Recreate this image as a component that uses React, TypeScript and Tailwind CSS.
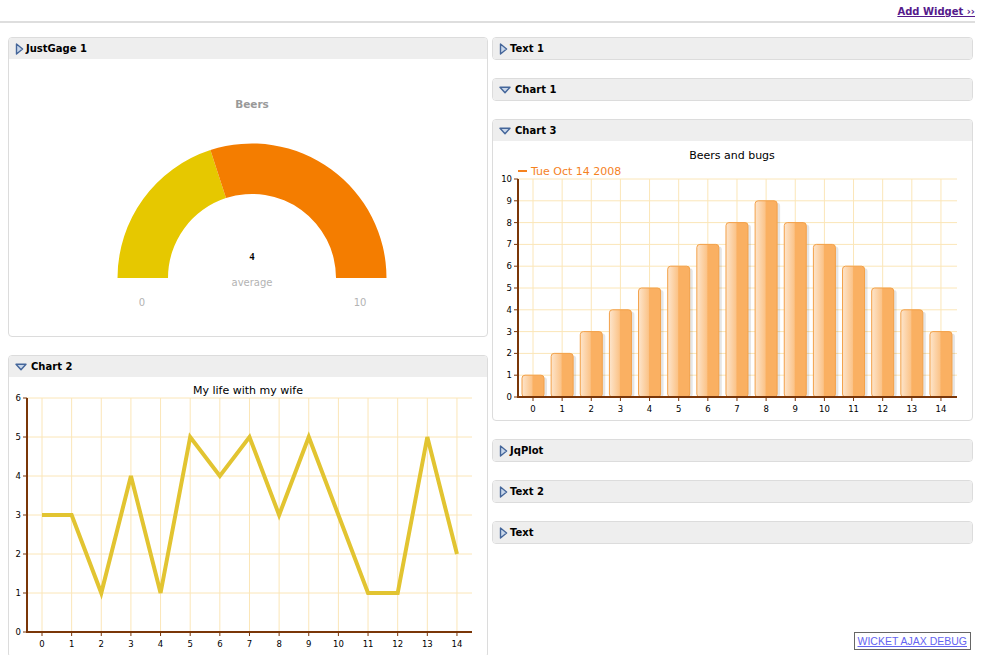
import React from "react";

const font = "font-['DejaVu_Sans',Verdana,sans-serif]";

function Arrow({ open }: { open: boolean }) {
  if (open) {
    return (
      <svg width="12" height="8" viewBox="0 0 12 8" className="shrink-0">
        <path d="M1 1.2 L11 1.2 L6 6.8 Z" fill="#c9d7ea" stroke="#45669a" strokeWidth="1.4" strokeLinejoin="round" />
      </svg>
    );
  }
  return (
    <svg width="9" height="12" viewBox="0 0 9 12" className="shrink-0">
      <path d="M1.5 1 L7.6 6 L1.5 11 Z" fill="#c9d7ea" stroke="#45669a" strokeWidth="1.4" strokeLinejoin="round" />
    </svg>
  );
}

function Widget({ title, open, children }: { title: string; open?: boolean; children?: React.ReactNode }) {
  return (
    <div className="mb-[18px] overflow-hidden rounded-[4px] border border-[#dcdcdc] bg-white">
      <div className={`flex h-[21px] items-center bg-[#eeeeee] pl-[6px] text-[10px] font-bold text-black ${open ? "gap-[4px]" : "gap-[2px]"}`}>
        <Arrow open={!!open} />
        <span>{title}</span>
      </div>
      {children}
    </div>
  );
}

function Gauge() {
  return (
    <svg width="478" height="277" className="block">
      <text x="243" y="49" textAnchor="middle" fontSize="10.5" fontWeight="bold" fill="#999">Beers</text>
      <path d="M108.5 219 A134.5 134.5 0 0 1 201.4 91.1 L217 139.1 A84 84 0 0 0 159 219 Z" fill="#e6c800" />
      <path d="M201.4 91.1 A134.5 134.5 0 0 1 377.5 219 L327 219 A84 84 0 0 0 217 139.1 Z" fill="#f47d00" />
      <text x="243" y="201" textAnchor="middle" fontSize="10" fontWeight="bold" fill="#000" fontFamily="'Liberation Serif', serif">4</text>
      <text x="243" y="227" textAnchor="middle" fontSize="10" fill="#b3b3b3">average</text>
      <text x="133" y="247" textAnchor="middle" fontSize="10" fill="#b3b3b3">0</text>
      <text x="351" y="247" textAnchor="middle" fontSize="10" fill="#b3b3b3">10</text>
    </svg>
  );
}

const bars = [1, 2, 3, 4, 5, 6, 7, 8, 9, 8, 7, 6, 5, 4, 3];

function BarChart() {
  const x0 = 40;
  const step = 29.14;
  const top = 38;
  const bottom = 256;
  const unit = (bottom - top) / 10;
  return (
    <svg width="479" height="279" className="block">
      <defs>
        <linearGradient id="barg" x1="0" x2="1" y1="0" y2="0">
          <stop offset="0" stopColor="#fde5cc" />
          <stop offset="0.45" stopColor="#fbc48a" />
          <stop offset="0.5" stopColor="#fab062" />
          <stop offset="1" stopColor="#fab062" />
        </linearGradient>
      </defs>
      <text x="239" y="18" textAnchor="middle" fontSize="11" fill="#000">Beers and bugs</text>
      <line x1="25" x2="34" y1="30" y2="30" stroke="#f5821f" strokeWidth="2" />
      <text x="38" y="34" fontSize="11" fill="#f5821f">Tue Oct 14 2008</text>
      {Array.from({ length: 11 }, (_, i) => (
        <line key={"h" + i} x1="25" x2="464" y1={bottom - i * unit} y2={bottom - i * unit} stroke="#fbe6b8" strokeWidth="1" />
      ))}
      {bars.map((_, i) => (
        <line key={"v" + i} x1={x0 + i * step} x2={x0 + i * step} y1={top} y2={bottom} stroke="#fbe6b8" strokeWidth="1" />
      ))}
      {bars.map((v, i) => {
        const cx = x0 + i * step;
        const h = v * unit;
        return (
          <g key={"b" + i}>
            <rect x={cx - 11 + 3} y={bottom - h + 2} width="22" height={h - 2} rx="3" fill="#000" opacity="0.1" />
            <rect x={cx - 11} y={bottom - h} width="22" height={h} rx="3" fill="url(#barg)" stroke="#f3a048" strokeWidth="1" />
          </g>
        );
      })}
      <line x1="25" x2="25" y1={top} y2={bottom} stroke="#7a3608" strokeWidth="2" />
      <line x1="24" x2="464" y1={bottom} y2={bottom} stroke="#7a3608" strokeWidth="2" />
      {Array.from({ length: 11 }, (_, i) => (
        <g key={"yl" + i}>
          <line x1="21" x2="25" y1={bottom - i * unit} y2={bottom - i * unit} stroke="#7a3608" />
          <text x="19" y={bottom - i * unit + 3} textAnchor="end" fontSize="8.5" fill="#000">{i}</text>
        </g>
      ))}
      {bars.map((_, i) => (
        <g key={"xl" + i}>
          <line x1={x0 + i * step} x2={x0 + i * step} y1={bottom} y2={bottom + 4} stroke="#7a3608" />
          <text x={x0 + i * step} y="271" textAnchor="middle" fontSize="8.5" fill="#000">{i}</text>
        </g>
      ))}
    </svg>
  );
}

const life = [3, 3, 1, 4, 1, 5, 4, 5, 3, 5, 3, 1, 1, 5, 2];

function LineChart() {
  const x0 = 33;
  const step = 29.64;
  const top = 21;
  const bottom = 255;
  const unit = (bottom - top) / 6;
  const pts = life.map((v, i) => `${x0 + i * step},${bottom - v * unit}`).join(" ");
  return (
    <svg width="478" height="280" className="block">
      <text x="239" y="17" textAnchor="middle" fontSize="11" fill="#000">My life with my wife</text>
      {Array.from({ length: 7 }, (_, i) => (
        <line key={"h" + i} x1="18" x2="463" y1={bottom - i * unit} y2={bottom - i * unit} stroke="#fbe6b8" strokeWidth="1" />
      ))}
      {life.map((_, i) => (
        <line key={"v" + i} x1={x0 + i * step} x2={x0 + i * step} y1={top} y2={bottom} stroke="#fbe6b8" strokeWidth="1" />
      ))}
      <polyline points={pts} fill="none" stroke="#e2c431" strokeWidth="4" strokeLinejoin="miter" />
      <line x1="18" x2="18" y1={top} y2={bottom} stroke="#7a3608" strokeWidth="2" />
      <line x1="17" x2="463" y1={bottom} y2={bottom} stroke="#7a3608" strokeWidth="2" />
      {Array.from({ length: 7 }, (_, i) => (
        <g key={"yl" + i}>
          <line x1="14" x2="18" y1={bottom - i * unit} y2={bottom - i * unit} stroke="#7a3608" />
          <text x="12" y={bottom - i * unit + 3} textAnchor="end" fontSize="8.5" fill="#000">{i}</text>
        </g>
      ))}
      {life.map((_, i) => (
        <g key={"xl" + i}>
          <line x1={x0 + i * step} x2={x0 + i * step} y1={bottom} y2={bottom + 4} stroke="#7a3608" />
          <text x={x0 + i * step} y="270" textAnchor="middle" fontSize="8.5" fill="#000">{i}</text>
        </g>
      ))}
    </svg>
  );
}

export default function App() {
  return (
    <div className={`${font} relative min-h-[655px] bg-white`}>
      <div className="mr-[6px] flex h-[23px] items-start justify-end border-b-2 border-[#dedede] pt-[4px]">
        <a href="#" className="text-[10px] font-bold text-[#551a8b] underline">
          Add Widget ››
        </a>
      </div>
      <div className="mt-[14px] grid grid-cols-[480px_481px] gap-[4px] pl-[8px]">
        <div>
          <Widget title="JustGage 1">
            <Gauge />
          </Widget>
          <Widget title="Chart 2" open>
            <LineChart />
          </Widget>
        </div>
        <div>
          <Widget title="Text 1" />
          <Widget title="Chart 1" open />
          <Widget title="Chart 3" open>
            <BarChart />
          </Widget>
          <Widget title="JqPlot" />
          <Widget title="Text 2" />
          <Widget title="Text" />
        </div>
      </div>
      <div className="fixed bottom-[5px] right-[10px] border border-[#666] bg-white px-[3px] py-[1px] font-['Liberation_Sans',Arial,sans-serif] text-[10.5px] leading-[14px]">
        <a href="#" className="text-[#6464f0] underline">WICKET AJAX DEBUG</a>
      </div>
    </div>
  );
}
